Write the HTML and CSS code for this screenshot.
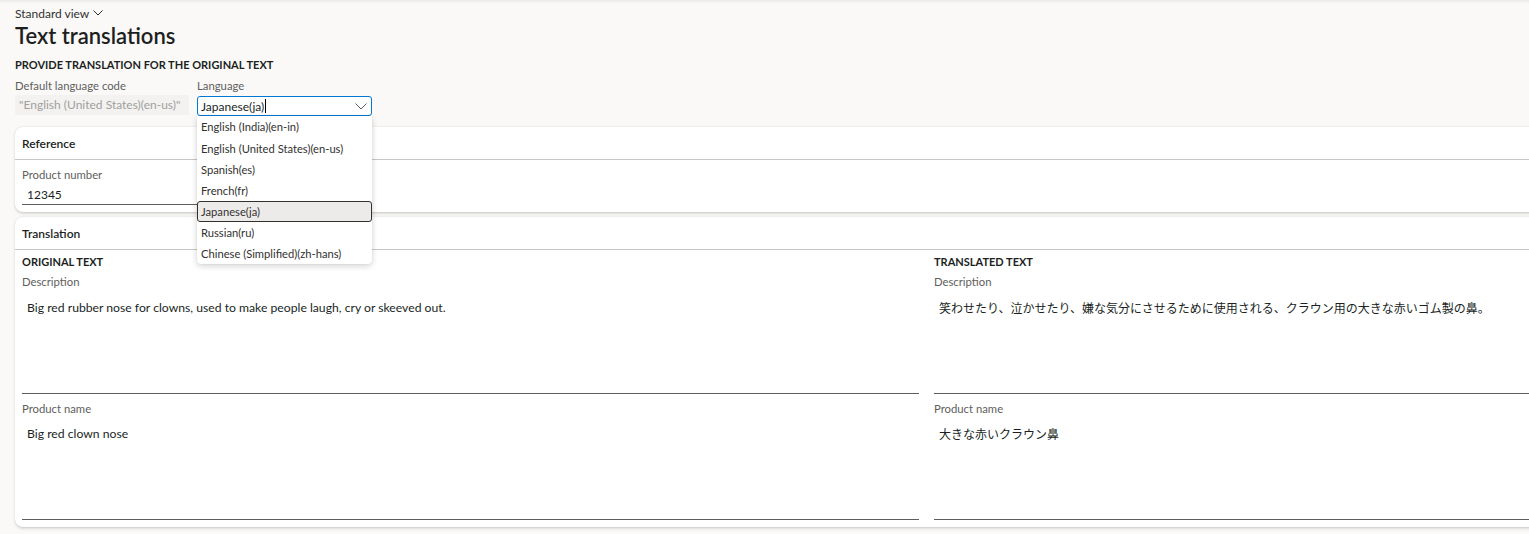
FILE: index.html
```html
<!DOCTYPE html>
<html lang="en">
<head>
<meta charset="utf-8">
<title>Text translations</title>
<link rel="stylesheet" href="styles.css">
</head>
<body>
<div class="topline"></div>
<main class="page">
  <div class="view-switch">Standard view
    <svg class="chev-small" width="10" height="6" viewBox="0 0 10 6"><path d="M0.5 0.5 L5 5 L9.5 0.5" fill="none" stroke="#323130" stroke-width="1"/></svg>
  </div>
  <h1 class="title">Text translations</h1>
  <h2 class="section-title">PROVIDE TRANSLATION FOR THE ORIGINAL TEXT</h2>
  <div class="lang-row">
    <div class="field">
      <label class="label">Default language code</label>
      <div class="readonly">"English (United States)(en-us)"</div>
    </div>
    <div class="field combo-wrap">
      <label class="label">Language</label>
      <div class="combo">
        <span class="combo-text">Japanese(ja)</span><span class="caret"></span>
        <svg class="chev" width="12" height="7" viewBox="0 0 12 7"><path d="M0.5 0.5 L6 6 L11.5 0.5" fill="none" stroke="#605e5c" stroke-width="1"/></svg>
      </div>
      <ul class="dropdown">
        <li class="opt">English (India)(en-in)</li>
        <li class="opt">English (United States)(en-us)</li>
        <li class="opt">Spanish(es)</li>
        <li class="opt">French(fr)</li>
        <li class="opt selected">Japanese(ja)</li>
        <li class="opt">Russian(ru)</li>
        <li class="opt">Chinese (Simplified)(zh-hans)</li>
      </ul>
    </div>
  </div>

  <section class="card ref-card">
    <div class="card-header">Reference</div>
    <div class="card-body">
      <label class="label">Product number</label>
      <div class="input small-input">12345</div>
    </div>
  </section>

  <section class="card trans-card">
    <div class="card-header">Translation</div>
    <div class="cols">
      <div class="col">
        <div class="col-title">ORIGINAL TEXT</div>
        <label class="label">Description</label>
        <div class="area">Big red rubber nose for clowns, used to make people laugh, cry or skeeved out.</div>
        <label class="label">Product name</label>
        <div class="area last">Big red clown nose</div>
      </div>
      <div class="col">
        <div class="col-title">TRANSLATED TEXT</div>
        <label class="label">Description</label>
        <div class="area jp">笑わせたり、泣かせたり、嫌な気分にさせるために使用される、クラウン用の大きな赤いゴム製の鼻。</div>
        <label class="label">Product name</label>
        <div class="area jp last">大きな赤いクラウン鼻</div>
      </div>
    </div>
  </section>
</main>
</body>
</html>
```

FILE: styles.css
```css
html, body {
  margin: 0;
  padding: 0;
  overflow: hidden;
}
body {
  background: #faf9f8;
  font-family: "Segoe UI", Lato, "Noto Sans CJK JP", sans-serif;
  color: #323130;
  width: 1529px;
  height: 534px;
}
.topline {
  height: 4px;
  background: linear-gradient(#ebebeb, #faf9f8);
}
.page {
  padding: 2px 0 0 15px;
  width: 1900px;
}
.view-switch {
  font-size: 12px;
  line-height: 16px;
  display: flex;
  align-items: center;
  gap: 4px;
}
.chev-small { margin-top: -2px; }
.title {
  margin: 0;
  font-size: 22px;
  font-weight: 600;
  line-height: 28px;
  color: #201f1e;
}
.section-title {
  margin: 7px 0 0;
  font-size: 11px;
  font-weight: 700;
  line-height: 16px;
  color: #201f1e;
}
.lang-row {
  display: flex;
  gap: 8px;
  margin-top: 5px;
}
.field {
  display: flex;
  flex-direction: column;
}
.label {
  display: block;
  font-size: 11.3px;
  line-height: 16px;
  color: #605e5c;
}
.readonly {
  margin-top: 1px;
  width: 170px;
  height: 20px;
  padding-left: 4px;
  background: #f3f2f1;
  color: #a19f9d;
  font-size: 12px;
  line-height: 20px;
  border-radius: 2px;
  white-space: nowrap;
}
.combo-wrap { position: relative; }
.combo {
  margin-top: 2px;
  width: 170px;
  height: 18px;
  border: 1px solid #0078d4;
  border-radius: 3px;
  display: flex;
  align-items: center;
  padding-left: 3px;
  font-size: 12px;
  color: #201f1e;
  position: relative;
  background: #fff;
}
.caret {
  display: inline-block;
  width: 1px;
  height: 14px;
  background: #000;
  margin-left: 1px;
}
.chev {
  position: absolute;
  right: 4px;
  top: 6px;
}
.dropdown {
  position: absolute;
  top: 38px;
  left: 0;
  width: 175px;
  margin: 0;
  padding: 0;
  list-style: none;
  background: #fff;
  border-radius: 0 0 4px 4px;
  box-shadow: 0 2px 6px rgba(0,0,0,0.18), 0 0 1px rgba(0,0,0,0.12);
  z-index: 10;
}
.opt {
  height: 21px;
  line-height: 21px;
  font-size: 11.2px;
  padding-left: 4px;
  color: #323130;
  white-space: nowrap;
  box-sizing: border-box;
}
.opt:first-child { height: 22px; }
.opt.selected {
  background: #edebe9;
  border: 1px solid #323130;
  border-radius: 3px;
  line-height: 19px;
  padding-left: 3px;
}
.card {
  background: #fff;
  border-radius: 8px;
  box-shadow: 0 0.6px 1.8px rgba(0,0,0,0.11), 0 1.6px 3.6px rgba(0,0,0,0.09);
  width: 1823px;
  box-sizing: border-box;
}
.ref-card { margin-top: 11px; }
.trans-card { margin-top: 5px; }
.card-header {
  height: 33px;
  box-sizing: border-box;
  padding: 8px 7px 0;
  font-size: 12px;
  font-weight: 600;
  line-height: 18px;
  color: #201f1e;
  border-bottom: 1px solid #c8c6c4;
}
.card-body {
  padding: 7px 7px 7px;
}
.input {
  border-bottom: 1px solid #605e5c;
  padding: 3px 0 0 5px;
  box-sizing: border-box;
  height: 22px;
  font-size: 12px;
  line-height: 18px;
  color: #201f1e;
}
.small-input { width: 175px; }
.cols {
  display: grid;
  grid-template-columns: 897px 897px;
  column-gap: 15px;
  padding: 4px 7px 7px;
}
.col-title {
  font-size: 11px;
  font-weight: 700;
  line-height: 16px;
  color: #201f1e;
  margin-bottom: 4px;
}
.area {
  height: 104px;
  box-sizing: border-box;
  border-bottom: 1px solid #605e5c;
  padding: 10px 5px 0;
  font-size: 12.2px;
  line-height: 16px;
  color: #201f1e;
  margin-bottom: 7px;
}
.area.last { margin-bottom: 0; height: 103px; padding-top: 9px; }
.jp {
  font-family: "Noto Sans CJK JP", sans-serif;
  font-size: 12px;
}
```
